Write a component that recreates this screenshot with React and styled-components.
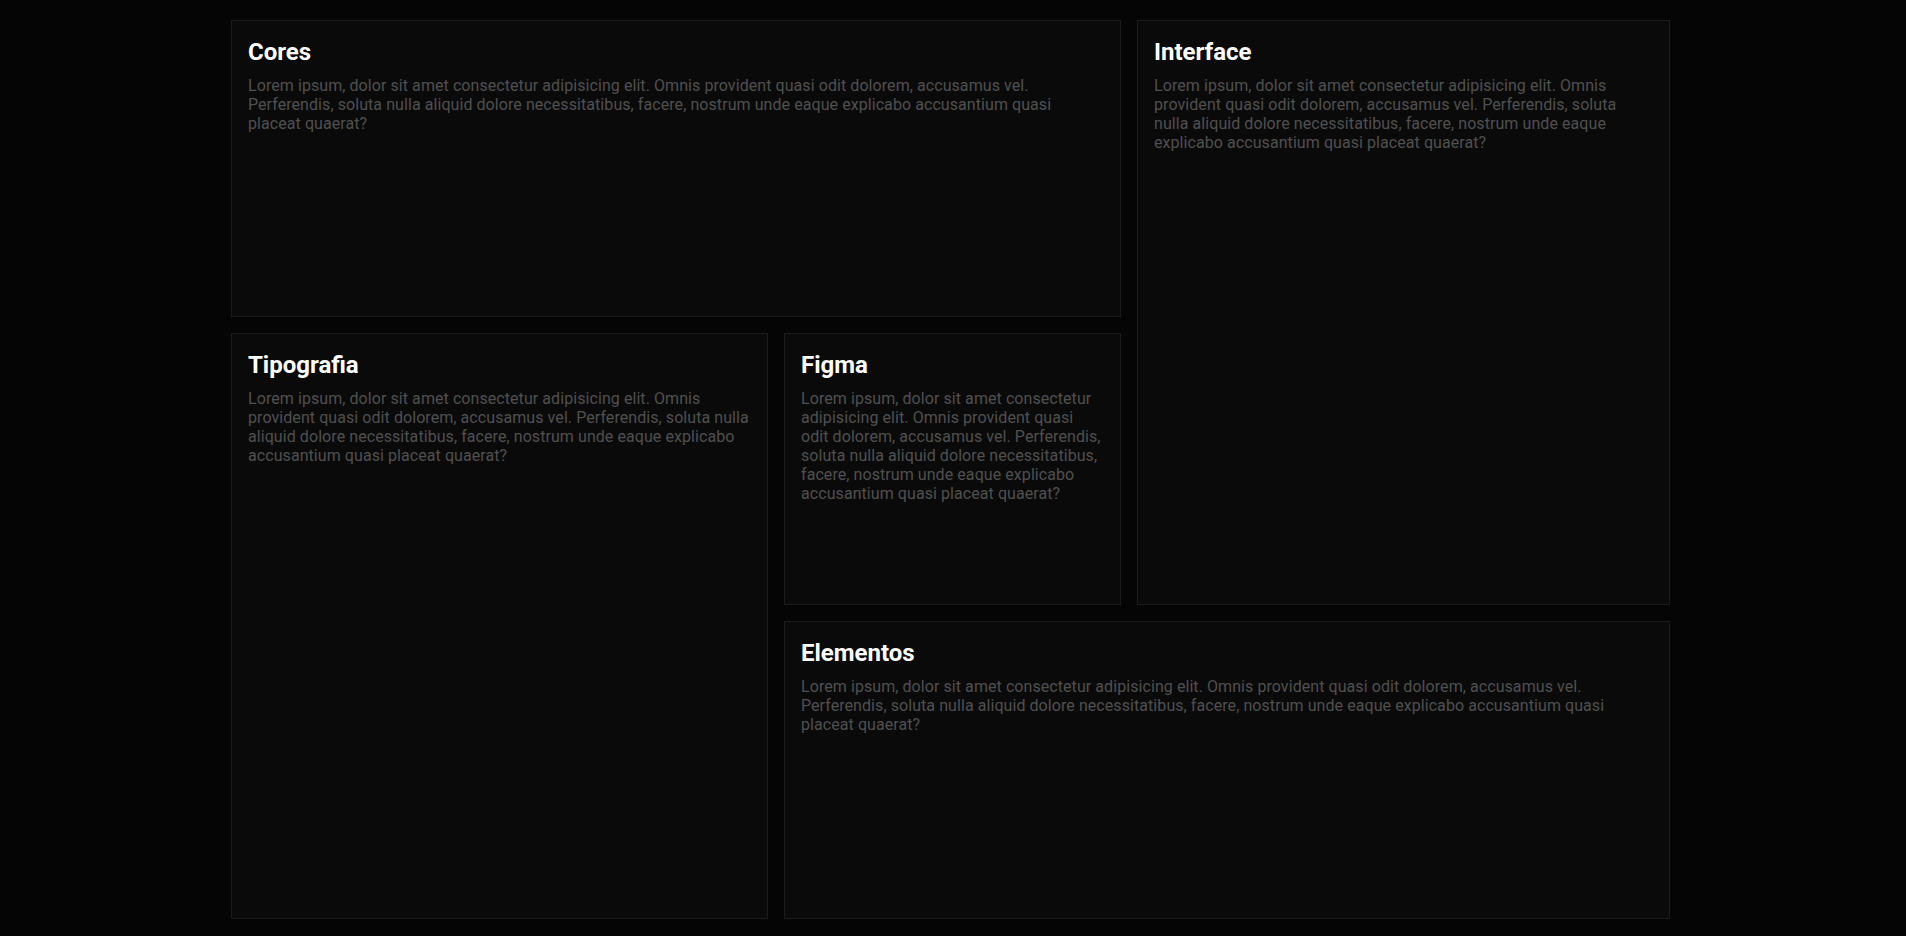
import React from "react";
import styled, { createGlobalStyle } from "styled-components";

const GlobalStyle = createGlobalStyle`
  * {
    box-sizing: border-box;
  }
  body {
    margin: 0;
    background-color: #050505;
    font-family: Roboto, "Liberation Sans", sans-serif;
  }
`;

const Page = styled.main`
  height: 936px;
  padding: 20px 0 17px 231px;
`;

const Grid = styled.section`
  width: 1439px;
  display: grid;
  grid-template-columns: 537px 337px 533px;
  grid-template-rows: 297px 272px 298px;
  gap: 16px;
`;

const Card = styled.article`
  grid-column: ${(props) => props.$col};
  grid-row: ${(props) => props.$row};
  background-color: #0a0a0a;
  border: 1px solid #1b1b1b;
  padding: 16px;
  overflow: hidden;
`;

const Title = styled.h2`
  margin: 1px 0 10px;
  font-size: 24px;
  font-weight: 700;
  color: #ffffff;
`;

const Text = styled.p`
  margin: 0;
  font-size: 16px;
  letter-spacing: 0.07px;
  color: #505050;
`;

const lorem =
  "Lorem ipsum, dolor sit amet consectetur adipisicing elit. Omnis provident quasi odit dolorem, accusamus vel. Perferendis, soluta nulla aliquid dolore necessitatibus, facere, nostrum unde eaque explicabo accusantium quasi placeat quaerat?";

const cards = [
  { title: "Cores", col: "1 / 3", row: "1 / 2" },
  { title: "Interface", col: "3 / 4", row: "1 / 3" },
  { title: "Tipografia", col: "1 / 2", row: "2 / 4" },
  { title: "Figma", col: "2 / 3", row: "2 / 3" },
  { title: "Elementos", col: "2 / 4", row: "3 / 4" },
];

const App = () => {
  return (
    <>
      <GlobalStyle />
      <Page>
        <Grid>
          {cards.map((card) => (
            <Card key={card.title} $col={card.col} $row={card.row}>
              <Title>{card.title}</Title>
              <Text>{lorem}</Text>
            </Card>
          ))}
        </Grid>
      </Page>
    </>
  );
};

export default App;
